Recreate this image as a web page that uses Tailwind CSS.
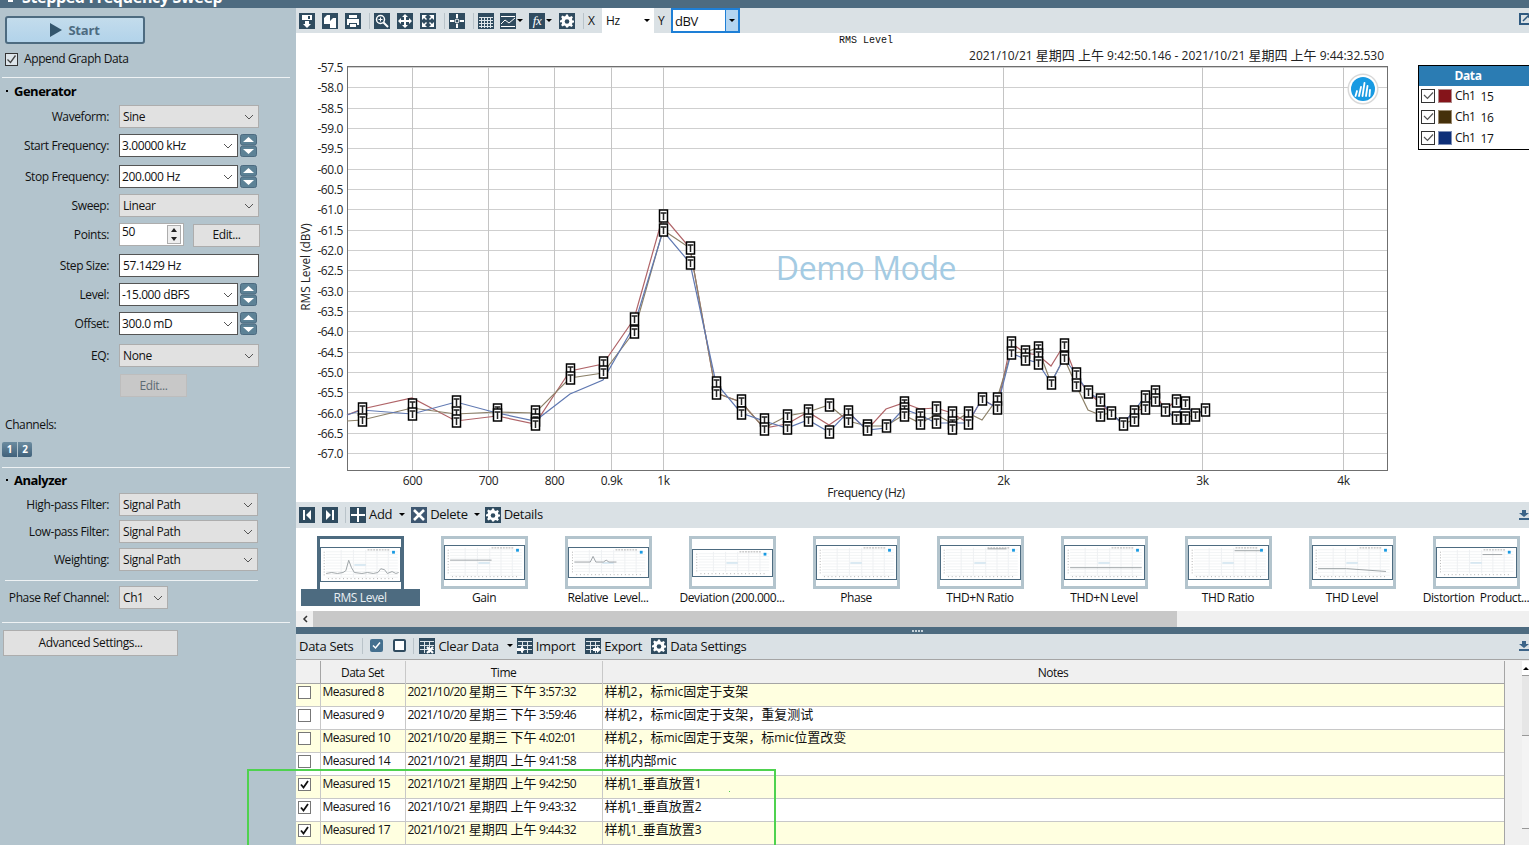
<!DOCTYPE html>
<html lang="en">
  <head>
    <meta charset="UTF-8" />
    <title>Stepped Frequency Sweep</title>
    <script src="https://cdn.jsdelivr.net/npm/@tailwindcss/browser@4"></script>
  </head>
  <body class="[font-family:'Open_Sans','Noto_Sans_CJK_SC',sans-serif] text-[12px] leading-[16px] tracking-[-0.4px] text-[#111] bg-white">
    <!-- shared icons -->
    <svg class="hidden">
      <symbol id="i-save" viewBox="0 0 16 16"><rect width="16" height="16" fill="#2f4b5f"/><path d="M3 2h10v5H3zM6 8h4v3h2l-4 4-4-4h2z" fill="#fff"/><rect x="9" y="3" width="2" height="3" fill="#2f4b5f"/></symbol>
      <symbol id="i-copy" viewBox="0 0 16 16"><rect width="16" height="16" fill="#2f4b5f"/><path d="M2 5l3-3h3v9H2zM8 8l3-3h3v10H8z" fill="#fff"/></symbol>
      <symbol id="i-print" viewBox="0 0 16 16"><rect width="16" height="16" fill="#2f4b5f"/><path d="M4 2h8v3H4zM2 6h12v6h-2v-2H4v2H2zM5 11h6v3H5z" fill="#fff"/></symbol>
      <symbol id="i-zoom" viewBox="0 0 16 16"><rect width="16" height="16" fill="#2f4b5f"/><circle cx="6.500" cy="6.500" r="4" fill="none" stroke="#fff" stroke-width="1.500"/><path d="M9.500 9.500l4.500 4.500" stroke="#fff" stroke-width="2"/><path d="M4.500 6.500h4M6.500 4.500v4" stroke="#fff"/></symbol>
      <symbol id="i-pan" viewBox="0 0 16 16"><rect width="16" height="16" fill="#2f4b5f"/><path d="M8 1l3 3H9v3h3V5l3 3-3 3V9H9v3h2l-3 3-3-3h2V9H4v2L1 8l3-3v2h3V4H5z" fill="#fff"/></symbol>
      <symbol id="i-fit" viewBox="0 0 16 16"><rect width="16" height="16" fill="#2f4b5f"/><path d="M2 2h5L5 4l2 2-1 1-2-2-2 2zM14 2v5l-2-2-2 2-1-1 2-2-2-2zM2 14V9l2 2 2-2 1 1-2 2 2 2zM14 14H9l2-2-2-2 1-1 2 2 2-2z" fill="#fff"/></symbol>
      <symbol id="i-cursor" viewBox="0 0 16 16"><rect width="16" height="16" fill="#2f4b5f"/><path d="M8 1v4M8 11v4M1 8h4M11 8h4" stroke="#fff" stroke-width="2"/><circle cx="8" cy="8" r="2" fill="none" stroke="#fff"/></symbol>
      <symbol id="i-table" viewBox="0 0 16 16"><rect width="16" height="16" fill="#2f4b5f"/><path d="M1 4.500h14M1 7.500h14M1 10.500h14M1 13.500h14M3.500 4v11M6.500 4v11M9.500 4v11M12.500 4v11" stroke="#dfe6ea" stroke-width="1"/></symbol>
      <symbol id="i-graph" viewBox="0 0 16 16"><rect width="16" height="16" fill="#2f4b5f"/><path d="M1 3.500h14M1 13.500h14" stroke="#fff"/><path d="M1 11l4-4 4 3 6-5" fill="none" stroke="#fff"/></symbol>
      <symbol id="i-gear" viewBox="0 0 16 16"><rect width="16" height="16" fill="#2f4b5f"/><path d="M7 2h2l.4 1.800 1.500.6L12.500 3.400l1.400 1.400-1 1.600.6 1.500L15 8v2l-1.500.2-.6 1.500 1 1.400-1.400 1.400-1.600-1-1.500.6L9 15H7l-.4-1.500-1.500-.6-1.600 1-1.400-1.400 1-1.400-.6-1.500L1 10V8l1.500-.5.6-1.500-1-1.600 1.400-1.400 1.600 1 1.500-.6z" fill="#fff" transform="translate(0 -.5)"/><circle cx="8" cy="8.500" r="2.300" fill="#2f4b5f"/></symbol>
      <symbol id="i-first" viewBox="0 0 16 16"><rect width="16" height="16" fill="#2f4b5f"/><path d="M4 3h2v10H4zM12 3v10L7 8z" fill="#fff"/></symbol>
      <symbol id="i-last" viewBox="0 0 16 16"><rect width="16" height="16" fill="#2f4b5f"/><path d="M10 3h2v10h-2zM4 3v10l5-5z" fill="#fff"/></symbol>
      <symbol id="i-plus" viewBox="0 0 16 16"><rect width="16" height="16" fill="#2f4b5f"/><path d="M7 1h2v6h6v2H9v6H7V9H1V7h6z" fill="#fff"/></symbol>
      <symbol id="i-x" viewBox="0 0 16 16"><rect width="16" height="16" fill="#3d5670"/><path d="M3 3l10 10M13 3L3 13" stroke="#fff" stroke-width="2.600"/></symbol>
      <symbol id="i-clear" viewBox="0 0 16 16"><rect width="16" height="16" fill="#2f4b5f"/><path d="M1 3.500h14M1 7.500h14M1 11.500h14M5.500 3v12M10.500 3v12" stroke="#dfe6ea"/><path d="M8 9l6 6M14 9l-6 6" stroke="#fff" stroke-width="2.200"/></symbol>
      <symbol id="i-import" viewBox="0 0 16 16"><rect width="16" height="16" fill="#2f4b5f"/><path d="M1 3.500h14M1 7.500h14M1 11.500h14M5.500 3v12M10.500 3v12" stroke="#dfe6ea"/><path d="M0 10h4V8l4 3.500L4 15v-2H0z" fill="#fff"/></symbol>
      <symbol id="i-export" viewBox="0 0 16 16"><rect width="16" height="16" fill="#2f4b5f"/><path d="M1 3.500h14M1 7.500h14M1 11.500h14M5.500 3v12M10.500 3v12" stroke="#dfe6ea"/><path d="M8 10h4V8l4 3.500L12 15v-2H8z" fill="#fff"/></symbol>
      <symbol id="i-spin" viewBox="0 0 17 23"><rect x=".5" y=".5" width="16" height="10.500" rx="2" fill="#5d8296" stroke="#4d6b80"/><rect x=".5" y="12" width="16" height="10.500" rx="2" fill="#5d8296" stroke="#4d6b80"/><path d="M3 8l5.500-5L14 8zM3 15l5.500 5 5.500-5z" fill="#fff"/></symbol>
      <symbol id="i-chev" viewBox="0 0 10 6"><path d="M1 1l4 4 4-4" fill="none" stroke="#555"/></symbol>
      <symbol id="i-pin" viewBox="0 0 10 10"><path d="M3 0h4v3h3L5 7 0 3h3zM0 8h10v2H0z" fill="#3c6488"/></symbol>
    </svg>

    <div class="w-[1529px] h-[845px] relative overflow-hidden flex flex-col">
      <div class="h-[8px] shrink-0 bg-[#4d6b80] overflow-hidden pl-[22px] relative">
        <span class="absolute left-[8px] top-0 w-[5px] h-[2px] bg-white"></span>
        <div class="-mt-[14px] text-white font-bold text-[16px] leading-[22px] tracking-[-0.35px]">Stepped Frequency Sweep</div>
      </div>

      <div class="flex flex-1 min-h-0">
        <!-- left settings panel -->
        <aside class="w-[296px] shrink-0 bg-[#b3c4cd] flex flex-col">
          <button class="ml-[5px] mt-[8px] w-[140px] h-[28px] rounded-[3px] border-2 border-[#4d6b80] bg-gradient-to-b from-[#c3dcec] to-[#b2d3ea] flex items-center justify-center gap-[6px] font-bold text-[#4d6b80] text-[13px] tracking-[-0.2px]">
            <svg class="w-[12px] h-[14px]" viewBox="0 0 12 14"><path d="M0 0l12 7-12 7z" fill="#34566d"/></svg>Start
          </button>
          <div class="flex items-center ml-[5px] mt-[7px] h-[16px] gap-[6px]">
            <span class="w-[13px] h-[13px] border border-[#333] bg-[#dde5ea] flex items-center justify-center"><svg class="w-[11px] h-[11px]" viewBox="0 0 11 11"><path d="M1.500 5.500l3 3 5-7" fill="none" stroke="#444" stroke-width="1.300"/></svg></span>
            <span>Append Graph Data</span>
          </div>
          <div class="mx-[2px] w-[288px] h-px bg-[#eef2f4] mt-[10px]"></div>
          <div class="flex items-center h-[18px] mt-[4px] pl-[6px] gap-[6px] font-bold text-[13px] tracking-[-0.5px] text-black"><span class="w-[2px] h-[2px] bg-black"></span>Generator</div>

          <div class="flex items-center h-[23px] mt-[5px]"><label class="w-[109px] mr-[10px] text-right">Waveform:</label>
            <div class="w-[140px] h-[23px] bg-[#e1e1e1] border border-[#adadad] flex items-center justify-between pl-[3px] pr-[4px]"><span>Sine</span><svg class="w-[10px] h-[6px]"><use href="#i-chev"/></svg></div></div>
          <div class="flex items-center h-[23px] mt-[6px]"><label class="w-[109px] mr-[10px] text-right">Start Frequency:</label>
            <div class="w-[119px] h-[23px] bg-white border border-[#555] flex items-center justify-between pl-[2px] pr-[4px]"><span>3.00000 kHz</span><svg class="w-[10px] h-[6px]"><use href="#i-chev"/></svg></div>
            <svg class="w-[17px] h-[23px] ml-[2px]"><use href="#i-spin"/></svg></div>
          <div class="flex items-center h-[23px] mt-[8px]"><label class="w-[109px] mr-[10px] text-right">Stop Frequency:</label>
            <div class="w-[119px] h-[23px] bg-white border border-[#555] flex items-center justify-between pl-[2px] pr-[4px]"><span>200.000 Hz</span><svg class="w-[10px] h-[6px]"><use href="#i-chev"/></svg></div>
            <svg class="w-[17px] h-[23px] ml-[2px]"><use href="#i-spin"/></svg></div>
          <div class="flex items-center h-[23px] mt-[6px]"><label class="w-[109px] mr-[10px] text-right">Sweep:</label>
            <div class="w-[140px] h-[23px] bg-[#e1e1e1] border border-[#adadad] flex items-center justify-between pl-[3px] pr-[4px]"><span>Linear</span><svg class="w-[10px] h-[6px]"><use href="#i-chev"/></svg></div></div>
          <div class="flex items-center h-[23px] mt-[6px]"><label class="w-[109px] mr-[10px] text-right">Points:</label>
            <div class="w-[65px] h-[23px] bg-white border border-[#adadad] flex items-start justify-between pl-[2px] pr-[2px]"><span>50</span>
              <span class="w-[14px] h-[19px] mt-[1px] border border-[#adadad] flex flex-col items-center justify-around bg-[#eee]"><span class="w-0 h-0 border-x-[3px] border-x-transparent border-b-[4px] border-b-[#222]"></span><span class="w-0 h-0 border-x-[3px] border-x-transparent border-t-[4px] border-t-[#222]"></span></span></div>
            <button class="ml-[9px] w-[67px] h-[23px] bg-[#e1e1e1] border border-[#adadad] mt-[1px]">Edit...</button></div>
          <div class="flex items-center h-[23px] mt-[8px]"><label class="w-[109px] mr-[10px] text-right">Step Size:</label>
            <div class="w-[140px] h-[23px] bg-white border border-[#555] flex items-center pl-[3px]">57.1429 Hz</div></div>
          <div class="flex items-center h-[23px] mt-[6px]"><label class="w-[109px] mr-[10px] text-right">Level:</label>
            <div class="w-[119px] h-[23px] bg-white border border-[#555] flex items-center justify-between pl-[2px] pr-[4px]"><span>-15.000 dBFS</span><svg class="w-[10px] h-[6px]"><use href="#i-chev"/></svg></div>
            <svg class="w-[17px] h-[23px] ml-[2px]"><use href="#i-spin"/></svg></div>
          <div class="flex items-center h-[23px] mt-[6px]"><label class="w-[109px] mr-[10px] text-right">Offset:</label>
            <div class="w-[119px] h-[23px] bg-white border border-[#555] flex items-center justify-between pl-[2px] pr-[4px]"><span>300.0 mD</span><svg class="w-[10px] h-[6px]"><use href="#i-chev"/></svg></div>
            <svg class="w-[17px] h-[23px] ml-[2px]"><use href="#i-spin"/></svg></div>
          <div class="flex items-center h-[23px] mt-[9px]"><label class="w-[109px] mr-[10px] text-right">EQ:</label>
            <div class="w-[140px] h-[23px] bg-[#e1e1e1] border border-[#adadad] flex items-center justify-between pl-[3px] pr-[4px]"><span>None</span><svg class="w-[10px] h-[6px]"><use href="#i-chev"/></svg></div></div>
          <button class="ml-[120px] mt-[7px] w-[67px] h-[23px] bg-[#c8c8c8] border border-[#bdbdbd] text-[#5d6b74]">Edit...</button>

          <div class="ml-[5px] mt-[20px] h-[16px]">Channels:</div>
          <div class="flex ml-[2px] mt-[9px] gap-px">
            <span class="w-[15px] h-[15px] rounded-l-[2px] bg-gradient-to-b from-[#6c8ca0] to-[#40617a] text-white font-bold text-[10px] leading-[15px] text-center">1</span>
            <span class="w-[14px] h-[15px] rounded-r-[2px] bg-gradient-to-b from-[#6c8ca0] to-[#40617a] text-white font-bold text-[10px] leading-[15px] text-center">2</span>
          </div>
          <div class="mx-[2px] w-[288px] h-px bg-[#eef2f4] mt-[10px]"></div>
          <div class="flex items-center h-[18px] mt-[3px] pl-[6px] gap-[6px] font-bold text-[13px] tracking-[-0.5px] text-black"><span class="w-[2px] h-[2px] bg-black"></span>Analyzer</div>
          <div class="flex items-center h-[23px] mt-[4px]"><label class="w-[109px] mr-[10px] text-right">High-pass Filter:</label>
            <div class="w-[139px] h-[23px] bg-[#e1e1e1] border border-[#adadad] flex items-center justify-between pl-[3px] pr-[4px]"><span>Signal Path</span><svg class="w-[10px] h-[6px]"><use href="#i-chev"/></svg></div></div>
          <div class="flex items-center h-[23px] mt-[4px]"><label class="w-[109px] mr-[10px] text-right">Low-pass Filter:</label>
            <div class="w-[139px] h-[23px] bg-[#e1e1e1] border border-[#adadad] flex items-center justify-between pl-[3px] pr-[4px]"><span>Signal Path</span><svg class="w-[10px] h-[6px]"><use href="#i-chev"/></svg></div></div>
          <div class="flex items-center h-[23px] mt-[5px]"><label class="w-[109px] mr-[10px] text-right">Weighting:</label>
            <div class="w-[139px] h-[23px] bg-[#e1e1e1] border border-[#adadad] flex items-center justify-between pl-[3px] pr-[4px]"><span>Signal Path</span><svg class="w-[10px] h-[6px]"><use href="#i-chev"/></svg></div></div>
          <div class="ml-[5px] w-[253px] h-px bg-[#eef2f4] mt-[9px]"></div>
          <div class="flex items-center h-[23px] mt-[5px]"><label class="w-[109px] mr-[10px] text-right">Phase Ref Channel:</label>
            <div class="w-[49px] h-[23px] bg-[#e1e1e1] border border-[#adadad] flex items-center justify-between pl-[3px] pr-[4px]"><span>Ch1</span><svg class="w-[10px] h-[6px]"><use href="#i-chev"/></svg></div></div>
          <div class="mx-[2px] w-[288px] h-px bg-[#eef2f4] mt-[13px]"></div>
          <button class="ml-[3px] mt-[7px] w-[175px] h-[26px] bg-[#e1e1e1] border border-[#adadad]">Advanced Settings...</button>
        </aside>

        <main class="flex-1 min-w-0 flex flex-col">
          <!-- graph toolbar -->
          <div class="h-[25px] shrink-0 bg-[#dae1e5] flex items-center pl-[3px] relative">
            <svg class="w-4 h-4"><use href="#i-save"/></svg>
            <svg class="w-4 h-4 ml-[7px]"><use href="#i-copy"/></svg>
            <svg class="w-4 h-4 ml-[7px]"><use href="#i-print"/></svg>
            <span class="w-px h-[16px] bg-[#b9c3c9] ml-[8px] mr-[4px]"></span>
            <svg class="w-4 h-4"><use href="#i-zoom"/></svg>
            <svg class="w-4 h-4 ml-[7px]"><use href="#i-pan"/></svg>
            <svg class="w-4 h-4 ml-[7px]"><use href="#i-fit"/></svg>
            <span class="w-px h-[16px] bg-[#b9c3c9] ml-[8px] mr-[4px]"></span>
            <svg class="w-4 h-4"><use href="#i-cursor"/></svg>
            <span class="w-px h-[16px] bg-[#b9c3c9] ml-[8px] mr-[4px]"></span>
            <svg class="w-4 h-4"><use href="#i-table"/></svg>
            <svg class="w-4 h-4 ml-[6px]"><use href="#i-graph"/></svg>
            <span class="ml-[1px] w-0 h-0 border-x-[3px] border-x-transparent border-t-[3px] border-t-black"></span>
            <span class="relative w-4 h-4 ml-[6px] bg-[#2f4b5f] text-white text-center italic [font-family:'Liberation_Serif',serif] text-[13px] leading-[15px]">fx</span>
            <span class="ml-[1px] w-0 h-0 border-x-[3px] border-x-transparent border-t-[3px] border-t-black"></span>
            <svg class="w-4 h-4 ml-[7px]"><use href="#i-gear"/></svg>
            <span class="w-px h-[16px] bg-[#b9c3c9] ml-[8px] mr-[4px]"></span>
            <span class="w-[14px]">X</span>
            <div class="w-[52px] h-[25px] bg-white flex items-center justify-between pl-[4px] pr-[4px]"><span>Hz</span><span class="w-0 h-0 border-x-[3px] border-x-transparent border-t-[3px] border-t-black"></span></div>
            <span class="ml-[4px] w-[13px]">Y</span>
            <div class="w-[69px] h-[25px] bg-white border-2 border-[#1e7fd6] flex items-center justify-between pl-[2px] text-[13px]"><span>dBV</span><span class="w-[13px] h-full bg-[#b3d5f1] border-l border-[#1e7fd6] flex items-center justify-center"><span class="w-0 h-0 border-x-[3px] border-x-transparent border-t-[3px] border-t-black"></span></span></div>
            <svg class="absolute right-0 top-[5px] w-[10px] h-[12px]" viewBox="0 0 10 12"><path d="M9 1H1v10h9" fill="none" stroke="#2f5a80" stroke-width="2"/><path d="M4 8l6-6M6 1h4v4" fill="none" stroke="#2f5a80" stroke-width="1.500"/></svg>
          </div>

          <!-- graph -->
          <div class="h-[469px] shrink-0 relative bg-white">
            <svg id="chart" class="w-[1233px] h-[469px]" viewBox="296 33 1233 469"></svg>
            <div class="absolute left-[1122px] top-[32px] w-[120px] h-[85px] border border-black bg-white">
              <div class="h-[20px] bg-[#2b7cb3] text-white font-bold text-center pr-[20px] leading-[20px]">Data</div>
              <div class="flex items-center h-[21px] pl-[2px] -mt-px"><span class="w-[14px] h-[14px] border border-[#333] flex items-center justify-center"><svg class="w-[11px] h-[11px]" viewBox="0 0 11 11"><path d="M1 5l3.500 3.500 5.500-6" fill="none" stroke="#555" stroke-width="1.200"/></svg></span><span class="ml-[3px] w-[14px] h-[14px] bg-[#85141a] border border-[#b08a8a]"></span><span class="ml-[3px]">Ch1</span><span class="ml-[5px] mt-[3px]">15</span></div>
              <div class="flex items-center h-[21px] pl-[2px]"><span class="w-[14px] h-[14px] border border-[#333] flex items-center justify-center"><svg class="w-[11px] h-[11px]" viewBox="0 0 11 11"><path d="M1 5l3.500 3.500 5.500-6" fill="none" stroke="#555" stroke-width="1.200"/></svg></span><span class="ml-[3px] w-[14px] h-[14px] bg-[#45300a] border border-[#9a8a70]"></span><span class="ml-[3px]">Ch1</span><span class="ml-[5px] mt-[3px]">16</span></div>
              <div class="flex items-center h-[21px] pl-[2px]"><span class="w-[14px] h-[14px] border border-[#333] flex items-center justify-center"><svg class="w-[11px] h-[11px]" viewBox="0 0 11 11"><path d="M1 5l3.500 3.500 5.500-6" fill="none" stroke="#555" stroke-width="1.200"/></svg></span><span class="ml-[3px] w-[14px] h-[14px] bg-[#0e2f78] border border-[#7f8fb5]"></span><span class="ml-[3px]">Ch1</span><span class="ml-[5px] mt-[3px]">17</span></div>
            </div>
          </div>

          <!-- graph navigator -->
          <div class="h-[26px] shrink-0 bg-[#dae1e5] flex items-center pl-[3px] pb-px relative text-[13px] tracking-[-0.3px]">
            <svg class="w-4 h-4"><use href="#i-first"/></svg>
            <svg class="w-4 h-4 ml-[7px]"><use href="#i-last"/></svg>
            <span class="w-px h-[16px] bg-[#b9c3c9] ml-[7px] mr-[4px]"></span>
            <svg class="w-4 h-4"><use href="#i-plus"/></svg><span class="ml-[3px] -mt-px">Add</span>
            <span class="ml-[7px] w-0 h-0 border-x-[3px] border-x-transparent border-t-[3px] border-t-black"></span>
            <svg class="w-4 h-4 ml-[6px]"><use href="#i-x"/></svg><span class="ml-[3px] -mt-px">Delete</span>
            <span class="ml-[6px] w-0 h-0 border-x-[3px] border-x-transparent border-t-[3px] border-t-black"></span>
            <svg class="w-4 h-4 ml-[5px]"><use href="#i-gear"/></svg><span class="ml-[3px] -mt-px">Details</span>
            <svg class="absolute right-0 top-[8px] w-[10px] h-[10px]"><use href="#i-pin"/></svg>
          </div>
          <div id="thumbs" class="h-[83px] shrink-0 bg-white flex pl-[2px] pt-[8px] overflow-hidden"></div>
          <div class="h-[16px] shrink-0 bg-[#f0f0f0] flex items-center">
            <span class="w-[17px] flex justify-center"><svg class="w-[6px] h-[8px]" viewBox="0 0 6 8"><path d="M5 1L2 4l3 3" fill="none" stroke="#333" stroke-width="1.500"/></svg></span>
            <span class="w-[864px] h-full bg-[#c8c8c8]"></span>
          </div>
          <div class="h-[7px] shrink-0 bg-[#4d6b80] flex items-center justify-center gap-px pl-[10px]"><span class="w-[2px] h-[2px] bg-[#c5d2da]"></span><span class="w-[2px] h-[2px] bg-[#c5d2da]"></span><span class="w-[2px] h-[2px] bg-[#c5d2da]"></span><span class="w-[2px] h-[2px] bg-[#c5d2da]"></span></div>

          <!-- data sets toolbar -->
          <div class="h-[26px] shrink-0 bg-[#dae1e5] border-b border-[#a5a5a5] flex items-center pl-[3px] pb-[2px] relative text-[13px] tracking-[-0.3px]">
            <span>Data Sets</span>
            <span class="w-px h-[16px] bg-[#b9c3c9] ml-[9px] mr-[7px]"></span>
            <span class="w-[13px] h-[13px] rounded-[2px] bg-[#44708f] flex items-center justify-center"><svg class="w-[9px] h-[9px]" viewBox="0 0 9 9"><path d="M1 4.500l2.500 2.500L8 1.500" fill="none" stroke="#fff" stroke-width="1.500"/></svg></span>
            <span class="ml-[10px] w-[13px] h-[13px] rounded-[2px] bg-white border-2 border-[#2f4b5f]"></span>
            <span class="w-px h-[16px] bg-[#b9c3c9] ml-[7px] mr-[5px]"></span>
            <svg class="w-4 h-4"><use href="#i-clear"/></svg><span class="ml-[3px]">Clear Data</span>
            <span class="ml-[8px] w-0 h-0 border-x-[3px] border-x-transparent border-t-[3px] border-t-black"></span>
            <svg class="w-4 h-4 ml-[4px]"><use href="#i-import"/></svg><span class="ml-[3px]">Import</span>
            <svg class="w-4 h-4 ml-[10px]"><use href="#i-export"/></svg><span class="ml-[3px]">Export</span>
            <svg class="w-4 h-4 ml-[9px]"><use href="#i-gear"/></svg><span class="ml-[3px]">Data Settings</span>
            <svg class="absolute right-0 top-[7px] w-[10px] h-[10px]"><use href="#i-pin"/></svg>
          </div>

          <!-- data sets table -->
          <div class="flex-1 min-h-0 flex overflow-hidden bg-[#f0f0f0] pt-px">
            <table class="table-fixed w-[1208px] border-collapse self-start tracking-[-0.5px]">
              <colgroup><col class="w-[24px]" /><col class="w-[85px]" /><col class="w-[197px]" /><col class="w-[902px]" /></colgroup>
              <thead>
                <tr class="h-[22px] bg-[#f0f0f0] border-b border-[#a5a5a5] font-normal">
                  <th class="border-r border-[#a5a5a5] font-normal"></th>
                  <th class="border-r border-[#c8c8c8] font-normal pt-[2px]">Data Set</th>
                  <th class="border-r border-[#c8c8c8] font-normal pt-[2px]">Time</th>
                  <th class="border-r border-[#a5a5a5] font-normal pt-[2px]">Notes</th>
                </tr>
              </thead>
              <tbody id="rows"></tbody>
            </table>
            <div class="ml-auto w-[7px] flex flex-col">
              <div class="h-[15px] bg-white border-b border-[#999] flex justify-center pt-[6px]"><span class="w-0 h-0 border-x-[3px] border-x-transparent border-b-[3px] border-b-black"></span></div>
              <div class="h-[59px] bg-[#e6e6e6]"></div>
              <div class="h-[94px] bg-[#f4f4f4] border-y border-[#999]"></div>
            </div>
          </div>
        </main>
      </div>

      <!-- annotation drawn over the screenshot -->
      <div class="absolute left-[247px] top-[769px] w-[529px] h-[78px] border-2 border-[#4fd24f] pointer-events-none"></div>
      <div class="absolute left-[729px] top-[791px] w-px h-px bg-[#4fd24f]"></div>
    </div>

    <script>
      const chart = document.getElementById("chart");
      let s = "";
      const yOf = (v) => 67 + (-57.5 - v) * 40.65;
      const xOf = (f) => 663 + Math.log10(f / 1000) * 1129.5;
      const CJK = /[\u3000-\u9fff\uff00-\uffef]+/g;

      // grid
      for (let v = -57.5; v >= -67; v -= 0.5) {
        const y = Math.round(yOf(v)) + 0.5;
        s += `<line x1="347" x2="1387" y1="${y}" y2="${y}" stroke="#cfcfcf"/>`;
        s += `<text x="343" y="${y + 4}" text-anchor="end" font-size="12" fill="#222">${v.toFixed(1)}</text>`;
      }
      const xt = [[600, "600"], [700, "700"], [800, "800"], [900, "0.9k"], [1000, "1k"], [2000, "2k"], [3000, "3k"], [4000, "4k"]];
      for (const [f, label] of xt) {
        const x = Math.round(xOf(f)) + 0.5;
        s += `<line x1="${x}" x2="${x}" y1="67" y2="470" stroke="#c4c4c4"/>`;
        s += `<text x="${x}" y="485" text-anchor="middle" font-size="12" fill="#222">${label}</text>`;
      }
      s += `<rect x="347.5" y="66.5" width="1040" height="404" fill="none" stroke="#6f6f6f"/>`;

      // labels
      const stamp = "2021/10/21 星期四 上午 9:42:50.146 - 2021/10/21 星期四 上午 9:44:32.530";
      s += `<text x="866" y="43" text-anchor="middle" font-size="10" letter-spacing="0" font-family="Liberation Mono" fill="#111">RMS Level</text>`;
      s += `<text x="1384" y="60" text-anchor="end" font-size="12" letter-spacing="0" fill="#222">${stamp.replace(CJK, (m) => `<tspan font-size="13">${m}</tspan>`)}</text>`;
      s += `<text x="866" y="497" text-anchor="middle" font-size="12" fill="#222">Frequency (Hz)</text>`;
      s += `<text transform="translate(310 267) rotate(-90)" text-anchor="middle" font-size="12" letter-spacing="-0.1" fill="#222">RMS Level (dBV)</text>`;
      s += `<text x="866" y="280" text-anchor="middle" font-size="32" fill="#a4cbe3">Demo Mode</text>`;

      // logo badge
      s += `<circle cx="1363" cy="89" r="15.500" fill="#d9d9d9"/><circle cx="1363" cy="89" r="14" fill="#fff"/><circle cx="1363" cy="89" r="12" fill="#189ae2"/>`;
      s += `<path d="M1355.500 96l1.500-5M1359 96l2-9M1362.500 96l2-13M1366 96l1.500-10M1369.500 96l.5-6" stroke="#fff" stroke-width="1.800" fill="none" stroke-linecap="round"/>`;

      // x, red, brown, blue, marker ys
      const pts = [
        [347, 415, 421, 415, []],
        [362, 409, 420, 410, [409, 420]], [412, 398, 408, 414, [405, 414]], [456, 421, 414, 402, [402, 413, 421]],
        [497, 416, 412, 413, [410, 415]], [535, 424, 413, 421, [412, 420, 424]], [570, 371, 378, 394, [370, 378]],
        [603, 364, 373, 380, [363, 372]], [634, 319, 332, 326, [319, 332]], [663, 216, 230, 231, [216, 230]],
        [690, 248, 248, 263, [248, 263]], [716, 393, 393, 383, [383, 393]], [741, 402, 402, 413, [401, 413]],
        [764, 428, 428, 421, [420, 429]], [787, 424, 416, 428, [416, 428]], [808, 412, 412, 420, [411, 420]],
        [829, 425, 405, 432, [405, 432]], [848, 412, 421, 412, [412, 421]], [867, 430, 426, 430, [426, 429]],
        [886, 409, 426, 428, [426]], [903.500, 403, 415, 409, [403, 409, 415]], [920, 409, 423, 415, [415, 423]],
        [936, 408, 415, 423, [408, 422]], [952, 413, 423, 423, [413, 423, 428]], [968, 423, 413, 423, [413, 423]],
        [982, 399, 420, 399, [399]], [997, 408, 399, 408, [399, 408]], [1011, 343, 353, 353, [343, 353]],
        [1025, 353, 352, 359, [352, 359]], [1038, 355, 348, 363, [348, 355, 363]], [1051, 366, 383, 383, [383]],
        [1064, 345, 358, 358, [345, 358]], [1076, 376, 385, 374, [374, 385]], [1088, 392, 410, 392, [392]],
        [1100, 403, 415, 400, [400, 415]], [1111, 413, 413, 413, [413]], [1122.500, 424, 424, 424, [424]],
        [1133.500, 412, 420, 412, [412, 420]], [1144.500, 408, 397, 397, [397, 408]], [1154.500, 392, 400, 400, [392, 400]],
        [1165, 410, 410, 410, [410]], [1175.500, 401, 418, 418, [401, 418]], [1184.500, 403, 418, 403, [403, 418]],
        [1194.500, 415, 415, 415, [415]], [1204.500, 410, 410, 410, [410]],
      ];
      [["#b06468", 1], ["#8c8068", 2], ["#6079b2", 3]].forEach(([color, i]) => {
        s += `<polyline fill="none" stroke="${color}" stroke-width="1.200" points="${pts.map((p) => p[0] + "," + p[i]).join(" ")}"/>`;
      });
      for (const p of pts) {
        for (const y of p[4]) {
          const x = Math.round(p[0]) + 0.5;
          s += `<rect x="${x - 4}" y="${y - 6}" width="8" height="12" fill="#fff" stroke="#000" stroke-width="1.500"/>`;
          s += `<line x1="${x - 3}" x2="${x + 3}" y1="${y - 3}" y2="${y - 3}" stroke="#555" stroke-width="2"/>`;
          s += `<line x1="${x}" x2="${x}" y1="${y - 3}" y2="${y + 4}" stroke="#222" stroke-width="1.500"/>`;
        }
      }
      chart.innerHTML = s;

      // graph thumbnails
      const thumbs = [
        ["RMS Level", 35, "M4 27l6-1 6 1 6-1 3-2 3-11 3 8 3 5 8 1 6-1 6 1 5-1 3-4 4 1 3 4 5-2 4 2 3-1"],
        ["Gain", 35, "M4 15h44"],
        ["Relative&nbsp; Level...", 31, "M4 15h17l3-6 3 6h8l3-2 3 2h8"],
        ["Deviation (200.000...", 28, ""],
        ["Phase", 35, ""],
        ["THD+N Ratio", 35, "M48 3h20"],
        ["THD+N Level", 35, "M4 23h76"],
        ["THD Ratio", 35, "M47 5h28"],
        ["THD Level", 35, "M4 24h30l42 3"],
        ["Distortion&nbsp; Product...", 31, "M47 7h21"],
      ];
      document.getElementById("thumbs").innerHTML = thumbs
        .map(([label, h, d], i) => {
          const box = i === 0 ? "border-[#4d6b80] border-b-0" : "border-[#b3c4cd]";
          const cap = i === 0 ? "bg-[#4d6b80] text-[#e8eef2]" : "text-[#111]";
          let grid = "";
          for (let y = 4; y < h - 3; y += 3) grid += `<line x1="4" x2="80" y1="${y}" y2="${y}" stroke="#f1f3f4"/>`;
          for (const x of [20, 33, 46, 58, 70]) grid += `<line x1="${x}" x2="${x}" y1="2" y2="${h - 4}" stroke="#eef0f2"/>`;
          return `<div class="w-[124px] shrink-0 flex flex-col items-center">
            <div class="w-[87px] h-[53px] border-[3px] ${box} flex items-center justify-center bg-white">
              <svg class="border border-[#4d6b80] w-[81px]" style="height:${h}px" viewBox="0 0 81 ${h}">${grid}
                <path d="M2 4V${h - 4}" stroke="#aaa" stroke-dasharray="1 2"/>
                <path d="M6 ${h - 2.5}H76" stroke="#aaa" stroke-dasharray="1 3"/>
                <path d="M48 2H72" stroke="#aaa" stroke-dasharray="2 1"/>
                <path d="M34 ${Math.round(h / 2)}h12" stroke="#b7d6e8"/>
                <path d="${d}" fill="none" stroke="#9aa0a4"/><rect x="74" y="3" width="3" height="3" fill="#189ae2"/></svg>
            </div>
            <div class="w-[119px] h-[17px] text-center leading-[17px] whitespace-nowrap ${cap}">${label}</div>
          </div>`;
        })
        .join("");

      // data set rows
      const rows = [
        ["Measured 8", "2021/10/20 星期三 下午 3:57:32", "样机2，标mic固定于支架", 0],
        ["Measured 9", "2021/10/20 星期三 下午 3:59:46", "样机2，标mic固定于支架，重复测试", 0],
        ["Measured 10", "2021/10/20 星期三 下午 4:02:01", "样机2，标mic固定于支架，标mic位置改变", 0],
        ["Measured 14", "2021/10/21 星期四 上午 9:41:58", "样机内部mic", 0],
        ["Measured 15", "2021/10/21 星期四 上午 9:42:50", "样机1_垂直放置1", 1],
        ["Measured 16", "2021/10/21 星期四 上午 9:43:32", "样机1_垂直放置2", 1],
        ["Measured 17", "2021/10/21 星期四 上午 9:44:32", "样机1_垂直放置3", 1],
      ];
      const cjk = (t) => t.replace(CJK, (m) => `<span class="text-[13px] tracking-normal">${m}</span>`);
      document.getElementById("rows").innerHTML = rows
        .map(([name, time, note, on], i) => {
          const bg = i % 2 === 0 ? "bg-[#ffffe0]" : "bg-white";
          const tick = on ? `<svg class="w-[11px] h-[11px]" viewBox="0 0 11 11"><path d="M2 5.500l2.500 3L9 2" fill="none" stroke="#111" stroke-width="1.800"/></svg>` : "";
          return `<tr class="h-[23px] ${bg} border-b border-[#c8c8c8] align-top leading-[15px]">
            <td class="border-r border-[#c8c8c8] pl-[2px] pt-[2px]"><span class="w-[13px] h-[13px] border border-[#777] bg-white flex items-center justify-center">${tick}</span></td>
            <td class="border-r border-[#c8c8c8] pl-[2px] whitespace-nowrap">${name}</td>
            <td class="border-r border-[#c8c8c8] pl-[2px] whitespace-nowrap">${cjk(time)}</td>
            <td class="border-r border-[#a5a5a5] pl-[2px] whitespace-nowrap tracking-normal">${cjk(note)}</td>
          </tr>`;
        })
        .join("");
    </script>
  </body>
</html>
